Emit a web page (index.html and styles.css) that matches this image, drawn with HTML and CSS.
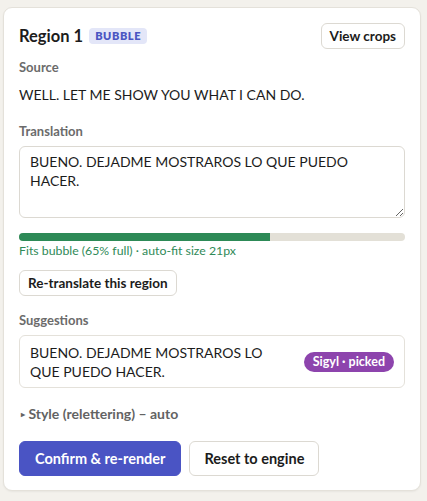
FILE: index.html
```html
<!DOCTYPE html>
<html>
<head>
<meta charset="utf-8">
<link rel="stylesheet" href="styles.css">
</head>
<body>
<div class="card">
  <div class="header">
    <div class="title">Region 1 <span class="tag">BUBBLE</span></div>
    <button class="btn btn-sm">View crops</button>
  </div>
  <div class="label">Source</div>
  <div class="source">WELL. LET ME SHOW YOU WHAT I CAN DO.</div>
  <div class="label label-gap">Translation</div>
  <textarea class="translation">BUENO. DEJADME MOSTRAROS LO QUE PUEDO HACER.</textarea>
  <div class="meter"><div class="meter-fill" style="width:65%"></div></div>
  <div class="fit">Fits bubble (65% full) · auto-fit size 21px</div>
  <button class="btn btn-sm retranslate">Re-translate this region</button>
  <div class="label label-gap-sm">Suggestions</div>
  <div class="suggestion">
    <div class="sugg-text">BUENO. DEJADME MOSTRAROS LO QUE PUEDO HACER.</div>
    <span class="pick">Sigyl · picked</span>
  </div>
  <div class="style-row"><span class="caret">▸</span> Style (relettering) – auto</div>
  <div class="actions">
    <button class="btn btn-primary">Confirm &amp; re-render</button>
    <button class="btn btn-lg">Reset to engine</button>
  </div>
</div>
</body>
</html>
```

FILE: styles.css
```css
* { box-sizing: border-box; }
body {
  margin: 0;
  padding: 7px 6px 8px 3px;
  background: #f3f1ec;
  font-family: "Lato", "Noto Sans", sans-serif;
  color: #1c1c1c;
}
.card {
  background: #fff;
  border: 1px solid #e4e1da;
  border-radius: 9px;
  padding: 15px 15px 14px 15px;
  box-shadow: 0 1px 2px rgba(0,0,0,0.05);
}
.header {
  display: flex;
  justify-content: space-between;
  align-items: center;
  height: 26px;
  margin-bottom: 10px;
}
.title {
  font-size: 16.5px;
  font-weight: 700;
  display: flex;
  align-items: center;
  gap: 6px;
}
.tag {
  font-size: 11px;
  font-weight: 800;
  letter-spacing: 0.6px;
  color: #4a55c2;
  background: #e3e6f8;
  border-radius: 4px;
  padding: 2px 6px;
  line-height: 12px;
}
.btn {
  font-family: inherit;
  background: #fff;
  border: 1px solid #dcd9d2;
  border-radius: 6px;
  color: #1c1c1c;
  font-weight: 700;
  cursor: pointer;
}
.btn-sm {
  font-size: 13.5px;
  height: 26px;
  padding: 0 8px;
}
.label {
  font-size: 13px;
  font-weight: 700;
  color: #6b6b6b;
  line-height: 16px;
  margin-bottom: 7px;
}
.label-gap { margin-top: 18px; }
.label-gap-sm { margin-top: 16px; }
.source {
  font-size: 14px;
  line-height: 20px;
  padding-top: 3px;
}
.translation {
  display: block;
  width: 100%;
  height: 72px;
  font-family: inherit;
  font-size: 14px;
  line-height: 19px;
  color: #1c1c1c;
  border: 1px solid #dcd9d2;
  border-radius: 6px;
  padding: 5px 10px;
  resize: vertical;
  margin: 0;
}
.meter {
  margin-top: 15px;
  height: 8px;
  background: #e3e0d7;
  border-radius: 4px;
  overflow: hidden;
}
.meter-fill {
  height: 100%;
  background: #2d8a57;
}
.fit {
  font-size: 12.3px;
  color: #2f8a58;
  line-height: 16px;
  margin-top: 2px;
}
.retranslate {
  margin-top: 11px;
  display: block;
}
.suggestion {
  display: flex;
  align-items: center;
  gap: 16px;
  border: 1px solid #e4e1da;
  border-radius: 6px;
  padding: 6px 10px;
  height: 53px;
}
.sugg-text {
  flex: 1;
  font-size: 14px;
  line-height: 19px;
}
.pick {
  background: #8d44ad;
  color: #fff;
  font-size: 12.5px;
  font-weight: 700;
  border-radius: 10px;
  padding: 2px 9px;
  line-height: 16px;
  white-space: nowrap;
}
.style-row {
  margin-top: 17px;
  font-size: 14px;
  font-weight: 700;
  color: #636363;
  line-height: 18px;
}
.caret {
  font-size: 8px;
  vertical-align: 2px;
  margin-left: 2px;
}
.actions {
  margin-top: 18px;
  display: flex;
  gap: 8px;
}
.btn-primary {
  background: #4a54c4;
  border-color: #4a54c4;
  color: #fff;
  font-size: 14.5px;
  height: 35px;
  padding: 0 15px;
}
.btn-lg {
  font-size: 14.5px;
  height: 35px;
  padding: 0 14px;
}
```
